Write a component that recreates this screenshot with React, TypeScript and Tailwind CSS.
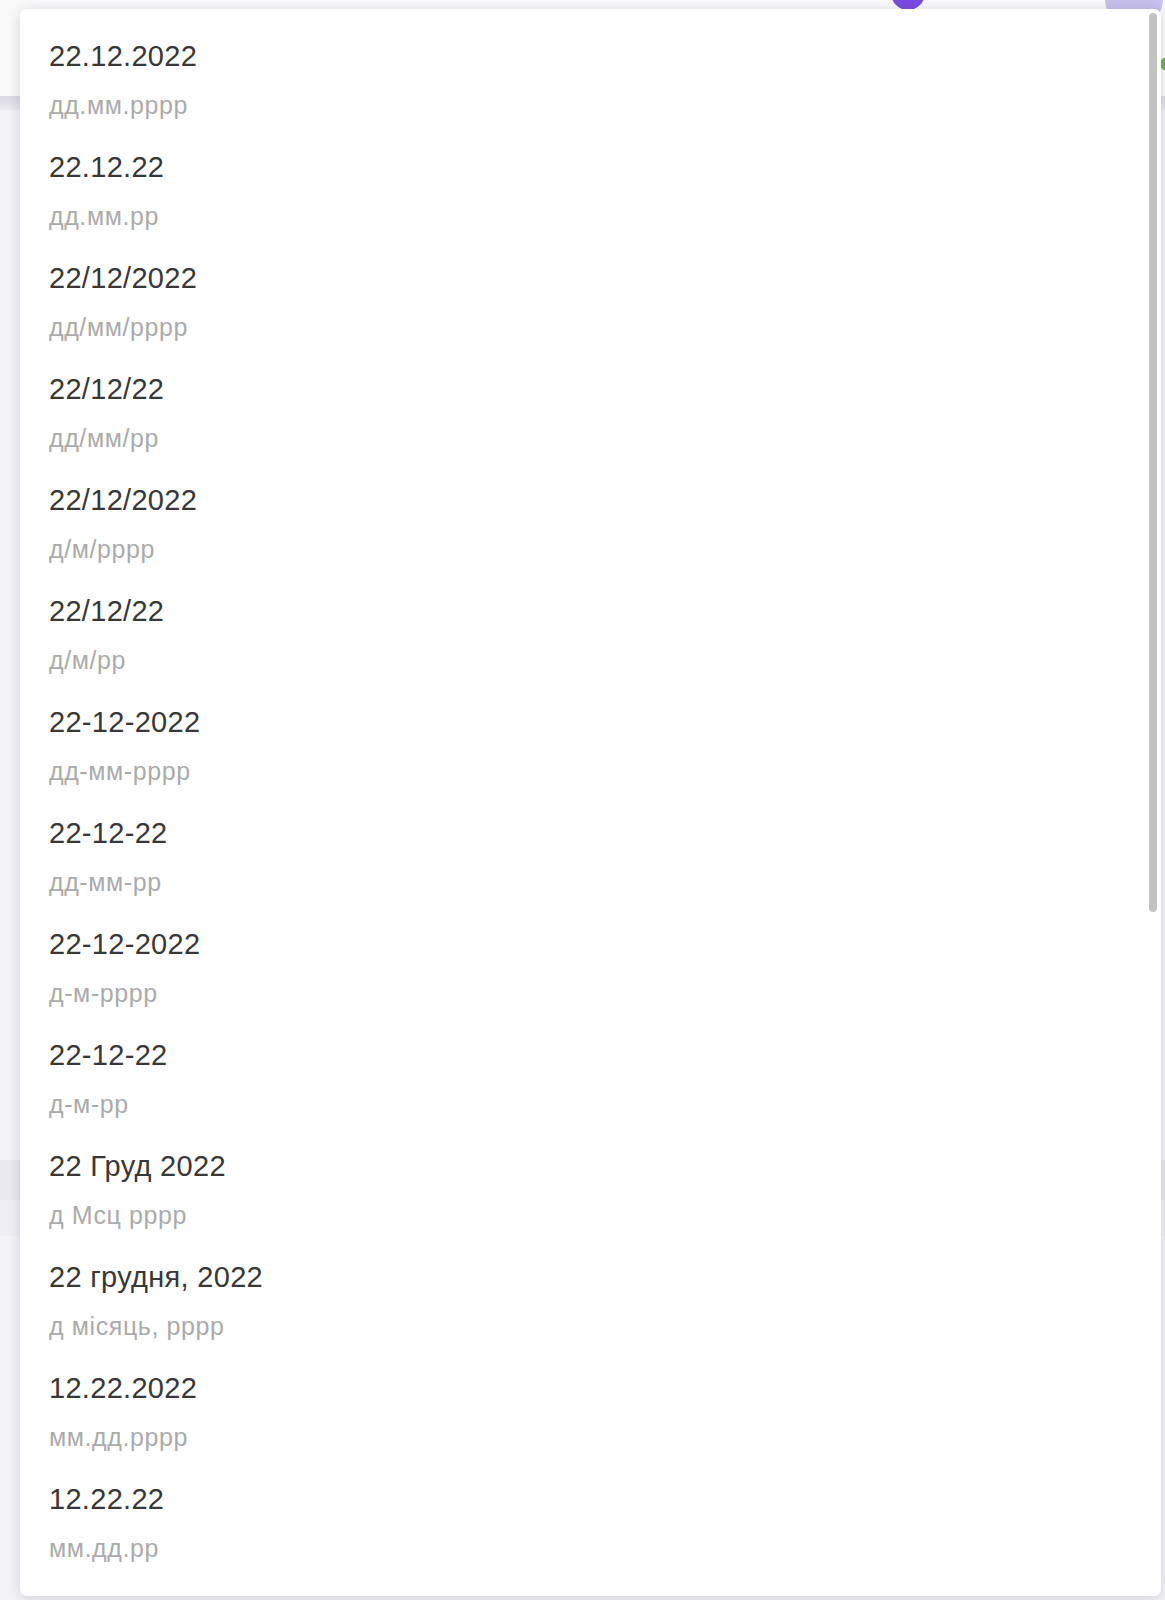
import React from "react";

const formats: Array<{ value: string; pattern: string }> = [
  { value: "22.12.2022", pattern: "дд.мм.рррр" },
  { value: "22.12.22", pattern: "дд.мм.рр" },
  { value: "22/12/2022", pattern: "дд/мм/рррр" },
  { value: "22/12/22", pattern: "дд/мм/рр" },
  { value: "22/12/2022", pattern: "д/м/рррр" },
  { value: "22/12/22", pattern: "д/м/рр" },
  { value: "22-12-2022", pattern: "дд-мм-рррр" },
  { value: "22-12-22", pattern: "дд-мм-рр" },
  { value: "22-12-2022", pattern: "д-м-рррр" },
  { value: "22-12-22", pattern: "д-м-рр" },
  { value: "22 Груд 2022", pattern: "д Мсц рррр" },
  { value: "22 грудня, 2022", pattern: "д місяць, рррр" },
  { value: "12.22.2022", pattern: "мм.дд.рррр" },
  { value: "12.22.22", pattern: "мм.дд.рр" }
];

export default function App() {
  return (
    <div className="relative h-[1600px] w-full overflow-hidden bg-[#f4f4f7] [font-family:'Liberation_Sans',Arial,sans-serif]">
      {/* page behind the dropdown */}
      <header className="flex h-[96px] items-start justify-end gap-[180px] bg-[#fafafb] pr-[2px]">
        <div className="-mt-[24px] h-[34px] w-[34px] rounded-full bg-[#7b4be0]" />
        <div className="-mt-[30px] h-[58px] w-[58px] rounded-full bg-[#c8c0ee]" />
      </header>
      <div className="h-[14px] bg-gradient-to-b from-[#d9d9e0] to-[#ececf1]" />
      <div className="h-[1050px]" />
      <div className="h-[40px] bg-[#e9e9ef]" />
      <div className="h-[36px] bg-[#f0f0f4]" />

      <div className="absolute right-0 top-[58px] h-[12px] w-[4px] rounded-l bg-[#5cc23a]" />

      {/* dropdown */}
      <div className="absolute left-[20px] top-[9px] h-[1587px] w-[1141px] overflow-hidden rounded-[7px] bg-white shadow-[0_2px_14px_rgba(40,40,70,0.18)]">
        <ul className="pt-[10px]">
          {formats.map((item, i) => (
            <li key={i} className="h-[111px] pl-[29px] pt-[18px]">
              <p className="text-[29px] leading-[38px] tracking-[0.3px] text-[#383838]">
                {item.value}
              </p>
              <p className="mt-[15px] text-[25px] leading-[30px] tracking-[0.6px] text-[#ababab]">
                {item.pattern}
              </p>
            </li>
          ))}
        </ul>
        <div className="absolute right-[4px] top-[4px] h-[899px] w-[8px] rounded-full bg-[#c2c2c2]" />
      </div>
    </div>
  );
}
